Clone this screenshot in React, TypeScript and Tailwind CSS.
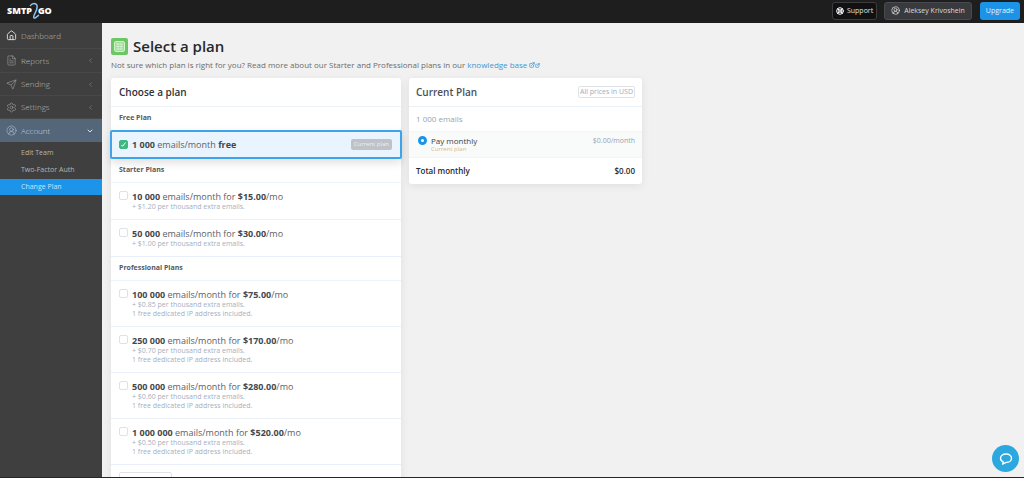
import { useState } from "react";
import {
  House,
  FileText,
  Send,
  Settings,
  CircleUserRound,
  ChevronLeft,
  ChevronDown,
  LifeBuoy,
  ExternalLink,
} from "lucide-react";

const navItems = [
  { label: "Dashboard", icon: House, arrow: false, height: "h-[26px]" },
  { label: "Reports", icon: FileText, arrow: true, height: "h-6" },
  { label: "Sending", icon: Send, arrow: true, height: "h-[23px]" },
  { label: "Settings", icon: Settings, arrow: true, height: "h-[23px]" },
];

const accountItems = ["Edit Team", "Two-Factor Auth", "Change Plan"];

type Plan = {
  id: string;
  emails: string;
  price: string;
  notes: string[];
};

const starterPlans: Plan[] = [
  { id: "s10", emails: "10 000", price: "$15.00", notes: ["+ $1.20 per thousand extra emails."] },
  { id: "s50", emails: "50 000", price: "$30.00", notes: ["+ $1.00 per thousand extra emails."] },
];

const dedicatedIp = "1 free dedicated IP address included.";

const professionalPlans: Plan[] = [
  { id: "p100", emails: "100 000", price: "$75.00", notes: ["+ $0.85 per thousand extra emails.", dedicatedIp] },
  { id: "p250", emails: "250 000", price: "$170.00", notes: ["+ $0.70 per thousand extra emails.", dedicatedIp] },
  { id: "p500", emails: "500 000", price: "$280.00", notes: ["+ $0.60 per thousand extra emails.", dedicatedIp] },
  { id: "p1000", emails: "1 000 000", price: "$520.00", notes: ["+ $0.50 per thousand extra emails.", dedicatedIp] },
];

function Logo() {
  return (
    <a href="#" aria-label="SMTP2GO" className="flex items-center text-[9px] font-extrabold leading-none text-white">
      <span>SMTP</span>
      <svg viewBox="0 0 12 18" className="-mx-[3px] h-[18px] w-3" fill="none" stroke="#8cc4ee" strokeWidth="1.5" strokeLinecap="round">
        <path d="M1.5 3.5C3 0.8 7.2 0.6 8 3.6C8.8 6.8 6.4 10.4 5.2 13C4.4 15 4.4 16.8 6.4 15.8L9.5 13.4" />
      </svg>
      <span>GO</span>
    </a>
  );
}

function Header() {
  return (
    <header className="flex h-[23px] shrink-0 items-center justify-between bg-[#1e1e1e] pr-1 pb-[2px] pl-[7px]">
      <Logo />
      <div className="flex items-center text-[7px] leading-none text-[#dcdcdc]">
        <button className="mr-[7px] flex h-[18px] items-center gap-[3px] rounded-[3px] border border-[#3d3d40] bg-[#111] px-[3px] text-[#e0e0e0]">
          <LifeBuoy size={8} strokeWidth={3} className="text-white" />
          Support
        </button>
        <button className="mr-2 flex h-[18px] items-center gap-1 rounded-[3px] border border-[#4a4b50] bg-[#393a3e] px-[6px]">
          <CircleUserRound size={9} strokeWidth={2} />
          Aleksey Krivoshein
        </button>
        <button className="flex h-[18px] items-center rounded-[3px] bg-[#1d93e8] px-[6px] text-[#e8f4ff]">Upgrade</button>
      </div>
    </header>
  );
}

function Sidebar() {
  const [active, setActive] = useState("Change Plan");

  return (
    <nav className="w-[102px] shrink-0 bg-[#3f3f3f] text-[8px] font-light text-[#b8b8b8]">
      {navItems.map(({ label, icon: Icon, arrow, height }) => (
        <a key={label} href="#" className={`flex items-center gap-1 border-b border-[#484848] pr-2 pl-[6px] ${height}`}>
          <Icon size={11} strokeWidth={label === "Dashboard" ? 2 : 1} className={label === "Dashboard" ? "text-[#e0e0e0]" : "text-[#bdbdbd]"} />
          <span className="flex-1">{label}</span>
          {arrow && <ChevronLeft size={7} strokeWidth={2} className="text-[#8a8a8a]" />}
        </a>
      ))}
      <a href="#" className="flex h-[23px] items-center gap-1 bg-[#53667a] pr-2 pl-[6px] text-[#cdd7e0]">
        <CircleUserRound size={11} strokeWidth={1} />
        <span className="flex-1">Account</span>
        <ChevronDown size={8} strokeWidth={3} className="text-[#dfe6ee]" />
      </a>
      <div className="pt-[3px] text-[7px] font-normal">
        {accountItems.map((item) => (
          <a
            key={item}
            href="#"
            onClick={() => setActive(item)}
            className={`mb-px flex h-4 items-center pl-[21px] ${active === item ? "bg-[#1b94e9] text-[#c8e6fb]" : "text-[#b4b4b4]"}`}
          >
            {item}
          </a>
        ))}
      </div>
    </nav>
  );
}

function PlanGroup({ title }: { title: string }) {
  return (
    <h3 className="flex h-6 items-center border-b border-[#edf3f8] px-2 text-[7px] font-bold text-[#555a60]">{title}</h3>
  );
}

function PlanRow({ plan, checked, onSelect }: { plan: Plan; checked: boolean; onSelect: () => void }) {
  return (
    <label className="flex items-start gap-1 border-b border-[#e9f0fa] px-2 pt-2 pb-2">
      <input
        type="checkbox"
        checked={checked}
        onChange={onSelect}
        className="h-[9px] w-[9px] appearance-none rounded-[2px] border border-[#d9e3ee] bg-white checked:border-[#3db881] checked:bg-[#3db881]"
      />
      <span>
        <span className="block text-[9px] leading-[11px] text-[#5c6168]">
          <b className="font-bold text-[#44484d]">{plan.emails}</b> emails/month for <b className="font-bold text-[#44484d]">{plan.price}</b>/mo
        </span>
        {plan.notes.map((note) => (
          <span key={note} className="block text-[7px] leading-[9px] text-[#a3afc0]">
            {note}
          </span>
        ))}
      </span>
    </label>
  );
}

export default function App() {
  const [selected, setSelected] = useState("free");

  return (
    <div className="flex h-screen flex-col overflow-hidden border-b border-[#25252b] bg-[#f1f1f1] font-['Open_Sans',sans-serif]">
      <Header />
      <div className="flex min-h-0 flex-1">
        <Sidebar />
        <main className="min-w-0 flex-1 overflow-hidden pt-[14px] pr-4 pl-[9px]">
          <div className="flex h-[18px] items-center gap-[5px]">
            <svg viewBox="0 0 17 17" className="h-[17px] w-[17px]" fill="none">
              <rect width="17" height="17" rx="2" fill="#6cc664" />
              <rect x="3.5" y="3.5" width="10" height="10" rx="1.5" fill="#a5dd9f" stroke="#d3f2ce" />
              <path d="M5 6h7M5 8.5h7M5 11h7M7 5v7M10 5v7" stroke="#d9f5d4" strokeWidth="0.7" />
            </svg>
            <h1 className="text-[15px] leading-none font-semibold text-[#25282b]">Select a plan</h1>
          </div>
          <p className="mt-1 text-[8px] leading-[12px] text-[#6c6c6c]">
            Not sure which plan is right for you? Read more about our Starter and Professional plans in our{" "}
            <a href="#" className="inline-flex items-center text-[#3f97d3]">
              knowledge base
              <ExternalLink size={6} strokeWidth={3} className="ml-[2px]" />
              <ExternalLink size={5} strokeWidth={3} />
            </a>
          </p>

          <div className="mt-[7px] flex items-start gap-2">
            <section className="max-w-[290px] flex-1 rounded-[3px] bg-white shadow-[0_2px_8px_rgba(0,0,0,0.08)]">
              <h2 className="flex h-[29px] items-center border-b border-[#edf3f8] px-2 text-[10px] font-semibold text-[#303338]">Choose a plan</h2>
              <h3 className="flex h-[23px] items-center px-2 text-[7px] font-bold text-[#555a60]">Free Plan</h3>
              <label className="relative -mx-px flex h-[29px] items-center gap-1 rounded-[2px] border-2 border-[#3da3ea] bg-[#e9f4fe] pr-2 pl-[7px] shadow-[0_4px_8px_rgba(0,0,0,0.12)]">
                <span className="relative flex">
                  <input
                    type="checkbox"
                    checked={selected === "free"}
                    onChange={() => setSelected("free")}
                    className="h-[9px] w-[9px] appearance-none rounded-[2px] border border-[#d9e3ee] bg-white checked:border-[#3db881] checked:bg-[#3db881]"
                  />
                  <svg viewBox="0 0 9 9" className="pointer-events-none absolute inset-0 h-[9px] w-[9px]" fill="none" stroke="#fff">
                    <path d="M2.5 5L3.6 6.3L6.5 2.5" />
                  </svg>
                </span>
                <span className="flex-1 text-[9px] leading-[11px] text-[#5c6168]">
                  <b className="font-bold text-[#44484d]">1 000</b> emails/month <b className="font-bold text-[#44484d]">free</b>
                </span>
                <span className="rounded-[2px] bg-[#bec2c9] px-[3px] text-[6px] leading-[11px] text-[#eef0f3]">Current plan</span>
              </label>
              <PlanGroup title="Starter Plans" />
              {starterPlans.map((plan) => (
                <PlanRow key={plan.id} plan={plan} checked={selected === plan.id} onSelect={() => setSelected(plan.id)} />
              ))}
              <PlanGroup title="Professional Plans" />
              {professionalPlans.map((plan) => (
                <PlanRow key={plan.id} plan={plan} checked={selected === plan.id} onSelect={() => setSelected(plan.id)} />
              ))}
              <div className="px-2 py-[7px]">
                <button aria-label="More plans" className="block h-4 w-[53px] rounded-[2px] border border-[#dfe3e8] bg-white" />
              </div>
            </section>

            <section className="max-w-[233px] flex-1 rounded-[3px] bg-white text-[8px] shadow-[0_2px_8px_rgba(0,0,0,0.08)]">
              <div className="flex h-[29px] items-center justify-between border-b border-[#e8f2f8] px-[7px]">
                <h2 className="text-[10px] font-semibold text-[#4b4f55]">Current Plan</h2>
                <span className="rounded-[2px] border border-[#dfe3e8] px-px text-[7px] leading-[10px] text-[#a3abba]">All prices in USD</span>
              </div>
              <p className="flex h-6 items-center px-[7px] text-[#98a3b5]">1 000 emails</p>
              <label className="flex h-[27px] items-start gap-1 border-y border-[#f3f5f7] bg-[#f9fafa] pt-[3px] pr-[7px] pl-[9px]">
                <input
                  type="radio"
                  name="billing"
                  defaultChecked
                  className="mt-px h-[9px] w-[9px] appearance-none rounded-full border-[3px] border-[#1d93e8] bg-white"
                />
                <span className="flex-1">
                  <span className="block leading-[11px] text-[#3f4348]">Pay monthly</span>
                  <span className="block text-[6px] leading-[7px] text-[#e0b983]">Current plan</span>
                </span>
                <span className="text-[7px] leading-[11px] text-[#98a3b5]">$0.00/month</span>
              </label>
              <div className="flex h-[26px] items-center justify-between px-[7px] font-semibold text-[#25282b]">
                <span>Total monthly</span>
                <span>$0.00</span>
              </div>
            </section>
          </div>
        </main>
      </div>

      <button aria-label="Open chat" className="fixed right-[5px] bottom-[6px] flex h-[27px] w-[27px] items-center justify-center rounded-full bg-[#2ba8e0]">
        <svg viewBox="0 0 14 14" className="h-[14px] w-[14px]" fill="none" stroke="#fff" strokeWidth="1.4" strokeLinejoin="round">
          <path d="M7 2C3.8 2 1.5 3.8 1.5 6.2C1.5 8 2.7 9.3 4.3 9.9L3.6 12.2L7.2 10.4C10.3 10.4 12.5 8.6 12.5 6.2C12.5 3.8 10.2 2 7 2Z" />
        </svg>
      </button>
    </div>
  );
}
